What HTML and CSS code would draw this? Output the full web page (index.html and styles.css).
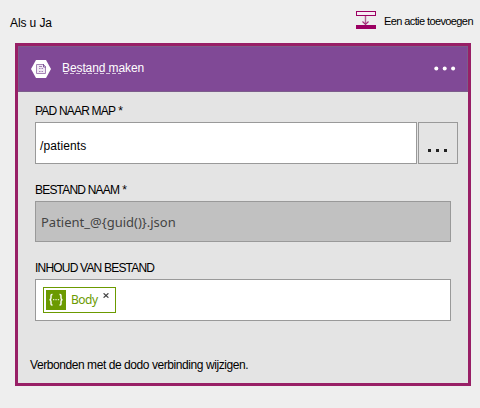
FILE: index.html
```html
<!DOCTYPE html>
<html lang="nl">
<head>
<meta charset="utf-8">
<title>Als u Ja</title>
<link rel="stylesheet" href="styles.css">
</head>
<body>
<header class="top">
  <span class="branch">Als u Ja</span>
  <span class="add">
    <svg class="add-icon" width="20" height="18" viewBox="0 0 20 18">
      <rect x=".5" y=".5" width="19" height="4" fill="#f6edf3" stroke="#9b0062"/>
      <path d="M9.500 5v8" stroke="#b45a92" stroke-width="1.400" fill="none"/>
      <path d="M6.500 10.500l3 3 3-3" stroke="#a32b78" stroke-width="1.200" fill="none"/>
      <rect y="14" width="20" height="4" fill="#9b0062"/>
    </svg>
    <span class="add-text">Een actie toevoegen</span>
  </span>
</header>
<main class="card">
  <div class="card-head">
    <svg class="file-icon" width="20" height="18" viewBox="0 0 20 18">
      <path d="M5 0h10l5 9-5 9H5L0 9z" fill="#fff"/>
      <path d="M5.500 4.500h7l2 2v7h-9z" fill="#f1eaf4" stroke="#a583b5"/>
      <path d="M12.500 4v3H15" fill="none" stroke="#80599a"/>
      <path d="M8 6.500h3M8 8.500h1.500M10.500 8.500H12M8 11.500h1.500M10.500 11.500H12" stroke="#a583b5" stroke-width="1.200"/>
    </svg>
    <span class="title">Bestand maken</span>
    <svg class="more" width="22" height="6" viewBox="0 0 22 6" fill="#fff">
      <circle cx="2.300" cy="2.600" r="2"/><circle cx="10.700" cy="2.600" r="2"/><circle cx="19.100" cy="2.600" r="2"/>
    </svg>
  </div>
  <div class="card-body">
    <div class="label"><span class="l1">PAD NAAR MAP</span><span class="star">*</span></div>
    <div class="row">
      <div class="input path"><span class="path-text">/patients</span></div>
      <div class="browse"><i></i><i></i><i></i></div>
    </div>
    <div class="label second"><span class="l2">BESTAND NAAM</span><span class="star">*</span></div>
    <div class="input name"><span class="name-text">Patient_@{guid()}.json</span></div>
    <div class="label third"><span class="l3">INHOUD VAN BESTAND</span></div>
    <div class="input content">
      <div class="token">
        <svg width="20" height="20" viewBox="0 0 20 20">
          <rect width="20" height="20" fill="#6b9a00"/>
          <path d="M6.500 4.500H6q-1 0-1 1v2.500q0 1.700-1.500 1.700Q5 9.700 5 11.500V14q0 1 1 1h.5M13.500 4.500h.5q1 0 1 1v2.500q0 1.700 1.500 1.700-1.500 0-1.500 1.800V14q0 1-1 1h-.5" fill="none" stroke="#fff" stroke-width="1.400"/>
          <path d="M7 9h1.300v1.300H7zM9.400 9h1.300v1.300H9.400zM11.800 9h1.300v1.300h-1.300z" fill="#e2edcb"/>
        </svg>
        <span class="token-text">Body</span>
        <svg class="close" width="6" height="5" viewBox="0 0 6 5"><path d="M.6.300l4.800 4.400M5.400.300L.6 4.700" stroke="#444" stroke-width="1.200"/></svg>
      </div>
    </div>
    <div class="foot">Verbonden met de dodo verbinding wijzigen.</div>
  </div>
</main>
</body>
</html>
```
FILE: styles.css
```css
* { box-sizing: border-box; }
body {
  margin: 0;
  width: 480px;
  height: 408px;
  overflow: hidden;
  background: #eee;
  color: #000;
  font: 12px/16px "Liberation Sans", Arial, sans-serif;
  white-space: nowrap;
}
.top { display: flex; height: 43px; padding-left: 10px; }
.branch { margin-top: 15px; letter-spacing: -0.1px; }
.add { display: flex; margin-left: auto; width: 124px; }
.add-icon { margin-top: 11px; }
.add-text { margin: 13px 0 0 8px; font-size: 11px; letter-spacing: -0.6px; }
.card {
  width: 456px;
  height: 343px;
  margin-left: 15px;
  border: 3px solid #981f66;
  background: #e4e4e4;
}
.card-head {
  display: flex;
  align-items: center;
  height: 46px;
  padding: 0 11px 0 12px;
  border: 1px solid #7c5d8b;
  background: #804996;
  color: #fff;
}
.title {
  margin-left: 11px;
  margin-top: -2px;
  line-height: 14px;
  letter-spacing: -0.1px;
  background: repeating-linear-gradient(90deg, #d8c6df 0 4px, transparent 4px 6px) 2px 12px / 57px 1px no-repeat;
}
.more { margin-left: auto; }
.card-body { padding: 11px 10px 0 17px; }
.label { display: flex; height: 19px; }
.l1, .l2, .l3 { letter-spacing: -0.8px; }
.star { margin-left: 3px; }
.row { display: flex; gap: 1px; }
.input { display: flex; align-items: center; height: 42px; width: 416px; border: 1px solid #999; background: #fff; }
.path { width: 382px; padding: 6px 0 0 4px; }
.path-text { letter-spacing: 0.1px; }
.browse { display: flex; width: 40px; height: 42px; border: 1px solid #999; padding: 26px 0 0 9px; gap: 5px; }
.browse i { width: 3px; height: 3px; background: #222; }
.second { margin-top: 18px; }
.name { height: 41px; padding-left: 5px; background: #c1c1c1; color: #444; font: 13px/18px "Noto Sans", sans-serif; }
.third { margin-top: 18px; }
.content { padding-left: 7px; }
.token { display: flex; align-items: center; width: 73px; height: 26px; padding-left: 2px; border: 1px solid #6b9a00; color: #6b9a00; font: 12px/18px "Noto Sans", sans-serif; }
.token-text { width: 27px; margin-left: 5px; letter-spacing: -0.5px; }
.close { margin: -9px 0 0 5px; }
.foot { margin: 36px 0 0 -5px; letter-spacing: -0.43px; }
```
